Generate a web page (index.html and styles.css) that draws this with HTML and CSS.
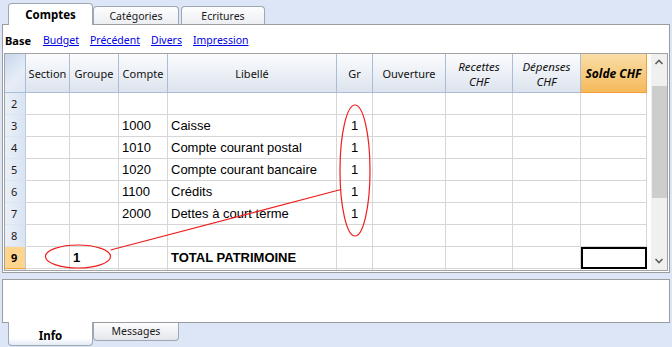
FILE: index.html
```html
<!DOCTYPE html>
<html lang="fr">
<head>
    <meta charset="UTF-8">
    <meta name="viewport" content="width=device-width, initial-scale=1.0">
    <title>Comptes</title>
    <link rel="stylesheet" href="styles.css">
</head>
<body>
    <div class="tabs top-tabs">
        <div class="tab active">Comptes</div>
        <div class="tab tab-cat">Catégories</div>
        <div class="tab tab-ecr">Ecritures</div>
    </div>

    <div class="panel">
        <div class="views">
            <span class="view current">Base</span>
            <a href="#" class="view">Budget</a>
            <a href="#" class="view">Précédent</a>
            <a href="#" class="view">Divers</a>
            <a href="#" class="view">Impression</a>
        </div>

        <div class="grid-frame">
            <table class="grid">
                <colgroup>
                    <col style="width:21px">
                    <col style="width:44px">
                    <col style="width:49px">
                    <col style="width:49px">
                    <col style="width:169px">
                    <col style="width:36px">
                    <col style="width:73px">
                    <col style="width:67px">
                    <col style="width:68px">
                    <col style="width:66px">
                </colgroup>
                <thead>
                    <tr>
                        <th class="corner"></th>
                        <th>Section</th>
                        <th>Groupe</th>
                        <th>Compte</th>
                        <th>Libellé</th>
                        <th>Gr</th>
                        <th>Ouverture</th>
                        <th class="it">Recettes<br>CHF</th>
                        <th class="it">Dépenses<br>CHF</th>
                        <th class="it solde">Solde CHF</th>
                    </tr>
                </thead>
                <tbody>
                    <tr><td class="num">2</td><td></td><td></td><td></td><td></td><td class="gr"></td><td></td><td></td><td></td><td></td></tr>
                    <tr><td class="num">3</td><td></td><td></td><td>1000</td><td>Caisse</td><td class="gr">1</td><td></td><td></td><td></td><td></td></tr>
                    <tr><td class="num">4</td><td></td><td></td><td>1010</td><td>Compte courant postal</td><td class="gr">1</td><td></td><td></td><td></td><td></td></tr>
                    <tr><td class="num">5</td><td></td><td></td><td>1020</td><td>Compte courant bancaire</td><td class="gr">1</td><td></td><td></td><td></td><td></td></tr>
                    <tr><td class="num">6</td><td></td><td></td><td>1100</td><td>Crédits</td><td class="gr">1</td><td></td><td></td><td></td><td></td></tr>
                    <tr><td class="num">7</td><td></td><td></td><td>2000</td><td>Dettes à court terme</td><td class="gr">1</td><td></td><td></td><td></td><td></td></tr>
                    <tr><td class="num">8</td><td></td><td></td><td></td><td></td><td class="gr"></td><td></td><td></td><td></td><td></td></tr>
                    <tr class="total"><td class="num sel-row">9</td><td></td><td class="grp">1</td><td></td><td>TOTAL PATRIMOINE</td><td class="gr"></td><td></td><td></td><td></td><td class="selected"></td></tr>
                    <tr class="cut"><td class="num"></td><td></td><td></td><td></td><td></td><td></td><td></td><td></td><td></td><td></td></tr>
                </tbody>
            </table>
            <div class="scroll-gap"></div>
            <div class="scrollbar">
                <svg class="arrow" width="16" height="14" viewBox="0 0 16 14"><polyline points="4.5,9 8,5.5 11.5,9" fill="none" stroke="#606060" stroke-width="1.6"/></svg>
                <div class="thumb"></div>
                <div class="track"></div>
                <svg class="arrow" width="16" height="14" viewBox="0 0 16 14"><polyline points="4.5,5 8,8.5 11.5,5" fill="none" stroke="#606060" stroke-width="1.6"/></svg>
            </div>
        </div>
    </div>

    <div class="info-panel"></div>

    <div class="tabs bottom-tabs">
        <div class="tab active">Info</div>
        <div class="tab">Messages</div>
    </div>

    <!-- red annotation marks drawn over the grid -->
    <svg class="marks" width="672" height="347" viewBox="0 0 672 347">
        <ellipse cx="355" cy="170.5" rx="15" ry="65.5" fill="none" stroke="#f01c1c" stroke-width="1.2"/>
        <ellipse cx="78" cy="256.5" rx="32.5" ry="11.5" fill="none" stroke="#f01c1c" stroke-width="1.2"/>
        <line x1="110.5" y1="250" x2="341" y2="189.5" stroke="#f01c1c" stroke-width="1.2"/>
    </svg>
</body>
</html>
```

FILE: styles.css
```css
* {
    box-sizing: border-box;
    margin: 0;
    padding: 0;
}

body {
    position: relative;
    width: 672px;
    height: 347px;
    overflow: hidden;
    background-color: #dce6f7;
    font-family: 'Noto Sans', sans-serif;
    color: #1a1a1a;
}

/* tabs */

.tabs {
    display: flex;
    padding-left: 8px;
}

.top-tabs {
    height: 24px;
    align-items: flex-end;
}

.tab {
    display: flex;
    align-items: center;
    justify-content: center;
    font-size: 10.5px;
    border: 1px solid #9ea7b3;
    background: linear-gradient(#fdfdfe, #eceef2);
}

.top-tabs .tab {
    width: 86px;
    height: 18px;
    border-bottom: none;
    border-radius: 4px 4px 0 0;
    padding-top: 1px;
}

.top-tabs .tab.active {
    position: relative;
    z-index: 1;
    width: 85px;
    height: 22px;
    margin-bottom: -1px;
    background: #fff;
    font-weight: bold;
    font-size: 11.5px;
    padding-top: 0;
    color: #000;
}

.top-tabs .tab-ecr {
    width: 84px;
    margin-left: 2px;
}

.panel {
    margin: 0 2px 0 2px;
    height: 249px;
    border: 1px solid #9c9c9c;
    background: #fff;
    padding: 0 1px;
}

.views {
    display: flex;
    align-items: center;
    gap: 11px;
    height: 28px;
    padding: 2px 0 0 1px;
    font-size: 10.5px;
}

.view {
    color: #0000e6;
}

.view.current {
    color: #000;
    font-weight: bold;
    font-size: 11px;
    margin-right: 1px;
}

/* grid */

.grid-frame {
    display: flex;
    height: 218px;
    border: 1px solid #a2a2a2;
    overflow: hidden;
}

.grid {
    width: 642px;
    table-layout: fixed;
    border-collapse: separate;
    border-spacing: 0;
    align-self: flex-start;
}

.grid th,
.grid td {
    border-right: 1px solid #d6d6d6;
    border-bottom: 1px solid #d6d6d6;
    height: 22px;
    white-space: nowrap;
    overflow: hidden;
}

.grid th {
    height: 39px;
    font-size: 11px;
    font-weight: normal;
    line-height: 15px;
    color: #111;
    background: linear-gradient(#fbfcfe, #dde4ee);
    border-color: #aabdd4;
}

.grid th.it {
    font-style: italic;
    font-size: 11.5px;
    padding-top: 1px;
}

.grid th.solde {
    font-weight: bold;
    font-size: 12px;
    color: #000;
    background: linear-gradient(#f9dea8, #f5b95a);
    border-right-color: #f2a037;
    border-bottom-color: #f2a037;
}

.grid th.corner {
    background: linear-gradient(135deg, #c8d7ec, #e6edf7 60%, #dde6f2);
}

.grid td {
    font-family: 'Liberation Sans', Arial, sans-serif;
    font-size: 13px;
    padding: 0 0 0 3px;
    color: #000;
}

.grid td.num {
    font-family: 'Noto Sans', sans-serif;
    font-size: 11px;
    padding-left: 6px;
    color: #1a1a1a;
    background: linear-gradient(90deg, #e9f0f9, #dae4f1);
    border-right-color: #b8cbe2;
    border-bottom-color: #dbe5f1;
}

.grid td.num.sel-row {
    font-weight: bold;
    background: #ffd58e;
    border-bottom-color: #f5a53a;
    color: #000;
}

.grid td.gr {
    text-align: center;
    padding: 0;
}

.grid tr.total td {
    font-weight: bold;
}

.grid td.grp {
    padding-left: 3px;
}

.grid td.selected {
    outline: 2px solid #000;
    outline-offset: -2px;
}

.grid tr.cut td {
    height: 4px;
    border-bottom: none;
}

.scroll-gap {
    width: 4px;
    flex-shrink: 0;
}

.scrollbar {
    width: 16px;
    flex-shrink: 0;
    display: flex;
    flex-direction: column;
    background: #f0f0f0;
}

.scrollbar .arrow {
    display: block;
    flex-shrink: 0;
    margin-top: 1px;
}

.scrollbar .thumb {
    height: 112px;
    margin: 17px 0 0 1px;
    background: #cdcdcd;
}

.scrollbar .track {
    flex: 1;
}

.scrollbar .arrow:last-child {
    margin: 0 0 2px;
}

/* bottom */

.info-panel {
    margin: 6px 2px 0 2px;
    height: 44px;
    border: 1px solid #9c9c9c;
    background: #fff;
}

.bottom-tabs {
    align-items: flex-start;
}

.bottom-tabs .tab {
    width: 86px;
    height: 18px;
    border-top: none;
    border-radius: 0 0 4px 4px;
    background: linear-gradient(#fdfdfe, #e3e6eb);
    padding-bottom: 2px;
}

.bottom-tabs .tab.active {
    position: relative;
    z-index: 1;
    width: 85px;
    height: 24px;
    margin-top: -1px;
    background: linear-gradient(#fff 70%, #e4ebf6);
    font-weight: bold;
    font-size: 11.5px;
    padding: 4px 0 0;
    color: #000;
}

.marks {
    position: absolute;
    left: 0;
    top: 0;
    pointer-events: none;
}
```
